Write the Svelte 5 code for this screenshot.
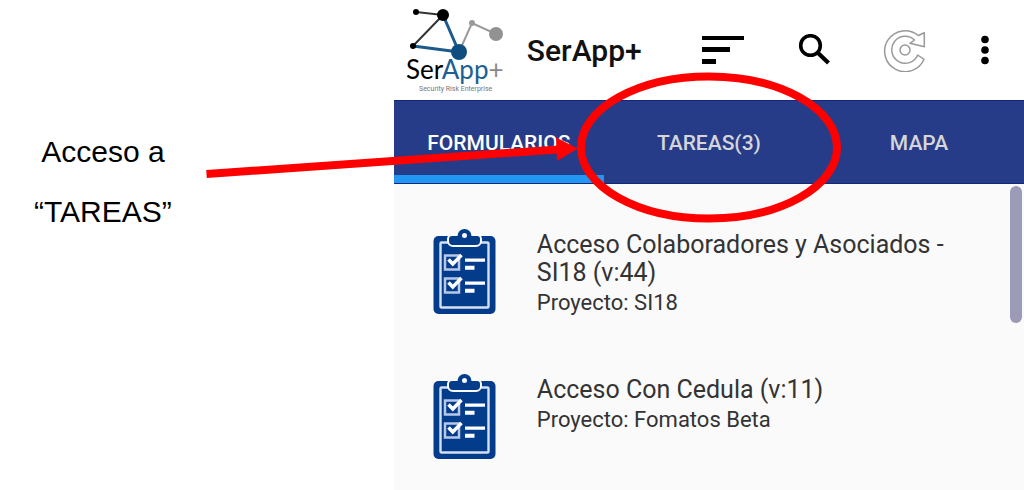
<script lang="ts">
	type Tab = {
		id: string;
		label: string;
	};

	type Form = {
		title: string;
		project: string;
	};

	const tabs: Tab[] = [
		{ id: 'forms', label: 'FORMULARIOS' },
		{ id: 'tasks', label: 'TAREAS(3)' },
		{ id: 'map', label: 'MAPA' }
	];

	const forms: Form[] = [
		{ title: 'Acceso Colaboradores y Asociados - SI18 (v:44)', project: 'SI18' },
		{ title: 'Acceso Con Cedula (v:11)', project: 'Fomatos Beta' }
	];

	let active = $state('forms');
</script>

<div class="slide">
	<p class="caption">Acceso a<br />“TAREAS”</p>

	<main class="app">
		<header class="toolbar">
			<svg class="logo" viewBox="0 0 98 90" role="img" aria-label="SerApp+">
				<g stroke-width="2">
					<path d="M9 7 36 10M36 10 6 41" stroke="#333" />
					<path d="M36 10 52 47M6 41 52 47" stroke="#1b5a8c" stroke-width="3" />
					<path d="M52 47 65 18 89 29" fill="none" stroke="#999" />
				</g>
				<circle cx="9" cy="7" r="3" />
				<circle cx="36" cy="10" r="6" />
				<circle cx="6" cy="41" r="3" />
				<circle cx="52" cy="47" r="8" fill="#0e4f80" />
				<circle cx="65" cy="18" r="3" fill="#999" />
				<circle cx="89" cy="29" r="7" fill="#929292" />
				<text class="brand" x="-1" y="74"
					>Ser<tspan fill="#1b5f94">App</tspan><tspan fill="#888">+</tspan></text
				>
				<text class="motto" x="12" y="86">Security Risk Enterprise</text>
			</svg>
			<h1>SerApp+</h1>
			<button type="button" aria-label="Ordenar">
				<svg width="42" height="30" viewBox="0 0 42 30">
					<path d="M0 1h42v4H0zM0 12h28v5H0zM0 24h14v5H0z" />
				</svg>
			</button>
			<button type="button" aria-label="Buscar">
				<svg width="32" height="32" viewBox="0 0 32 32" fill="none" stroke="#000">
					<circle cx="12.5" cy="11.5" r="9.8" stroke-width="3.6" />
					<path d="m19 18 11.500 11" stroke-width="4.200" />
				</svg>
			</button>
			<button type="button" aria-label="Sincronizar">
				<svg width="44" height="44" viewBox="0 0 44 44" fill="none" stroke="#999" stroke-width="1.500">
					<path
						d="M35.300 7.500A20.500 20.500 0 1 0 41 31.300L34.700 27A13.500 13.500 0 1 1 31.500 12L27 15.300 41.300 18.700V4.700Z"
						stroke-linejoin="round"
					/>
					<circle cx="22" cy="22" r="5" />
				</svg>
			</button>
			<button class="more" type="button" aria-label="Más opciones">
				<svg width="8" height="30" viewBox="0 0 8 30">
					<circle cx="4" cy="4.500" r="3.800" />
					<circle cx="4" cy="15" r="3.800" />
					<circle cx="4" cy="25.500" r="3.800" />
				</svg>
			</button>
		</header>

		<nav class="tabs">
			{#each tabs as tab (tab.id)}
				<button
					type="button"
					class:active={active === tab.id}
					aria-pressed={active === tab.id}
					onclick={() => (active = tab.id)}
				>
					{tab.label}
				</button>
			{/each}
		</nav>

		<div class="content">
			<ul>
				{#each forms as form (form.title)}
					<li>
						<svg class="clipboard" viewBox="0 0 64 86" aria-hidden="true">
							<rect x="0.500" y="7" width="62" height="78" rx="5" fill="#043c8c" />
							<rect
								x="7.500"
								y="13.500"
								width="48"
								height="65"
								rx="1"
								fill="#043c8c"
								stroke="#d5e0f2"
								stroke-width="2.400"
							/>
							<g fill="#043c8c">
								<g stroke="#fafafa" stroke-width="4">
									<circle cx="31.500" cy="7" r="7" />
									<path d="M19 7h25a3 3 0 0 1 3 3v2a4 4 0 0 1-4 4H20a4 4 0 0 1-4-4v-2a3 3 0 0 1 3-3Z" />
								</g>
								<circle cx="31.500" cy="7" r="7" />
								<path d="M19 7h25a3 3 0 0 1 3 3v2a4 4 0 0 1-4 4H20a4 4 0 0 1-4-4v-2a3 3 0 0 1 3-3Z" />
							</g>
							<circle cx="31.500" cy="6.500" r="2.500" fill="#fafafa" />
							{#each [0, 23] as y}
								<g transform="translate(0 {y})">
									<rect
										x="12"
										y="26.500"
										width="14"
										height="14"
										fill="none"
										stroke="#b6c8e6"
										stroke-width="2.500"
									/>
									<path d="m15.500 30.500 4.300 4.500 8.700-9" fill="none" stroke="#fff" stroke-width="3.500" />
									<path d="M32 29.500h20v3.200H32zM32 36.700h9.500v4H32z" fill="#fff" />
								</g>
							{/each}
						</svg>
						<div class="details">
							<h2>{form.title}</h2>
							<p>Proyecto: {form.project}</p>
						</div>
					</li>
				{/each}
			</ul>
			<span class="scroll-thumb"></span>
		</div>
	</main>

	<!-- pointer and highlight drawn over the app -->
	<svg class="marker" viewBox="0 0 1024 490" aria-hidden="true">
		<ellipse cx="709" cy="147.500" rx="128" ry="71" fill="none" stroke="#f00" stroke-width="8" />
		<path d="M206.500 174 558 149.500" stroke="#f00" stroke-width="8" />
		<path d="m556 137.500 22 11-21 12.500Z" fill="#f00" />
	</svg>
</div>

<style>
	:global(body) {
		margin: 0;
		background: #fff;
	}

	.slide {
		position: relative;
		display: grid;
		grid-template-columns: 5fr 8fr;
		min-height: 100vh;
	}

	.caption {
		margin: 0;
		padding: 122px 188px 0 0;
		padding-left: 0;
		color: #000;
		font-family: 'Arial Narrow', 'Liberation Sans', sans-serif;
		font-size: 30px;
		line-height: 60px;
		text-align: center;
		white-space: nowrap;
	}

	.app {
		display: flex;
		flex-direction: column;
		color: #333;
		background: #fafafa;
		font-family: Roboto, sans-serif;
	}

	.toolbar {
		display: flex;
		height: 100px;
		padding-right: 4px;
		align-items: center;
		background: #fff;
	}

	.logo {
		width: 98px;
		height: 90px;
		margin-left: 13px;
		flex: none;
		overflow: visible;
	}

	.brand {
		font-family: Lato, sans-serif;
		font-size: 26px;
	}

	.motto {
		fill: #777;
		font-size: 7px;
	}

	h1 {
		flex: 1;
		margin: 0 0 0 22px;
		color: #111;
		font-size: 30px;
		font-weight: 500;
	}

	button {
		padding: 0;
		background: none;
		border: 0;
		cursor: pointer;
		font: inherit;
	}

	.toolbar button {
		display: flex;
		width: 91px;
		height: 64px;
		align-items: center;
		justify-content: center;
	}

	.toolbar .more {
		width: 70px;
	}

	.tabs {
		display: grid;
		grid-template-columns: repeat(3, 1fr);
		background: #263c88;
		border-top: 1px solid #14267a;
		border-bottom: 1px solid #14267a;
	}

	.tabs button {
		height: 82px;
		padding-top: 2px;
		color: #d6d6d8;
		border-top: 8px solid transparent;
		border-bottom: 8px solid transparent;
		font-size: 21px;
		font-weight: 500;
	}

	.tabs .active {
		color: #fff;
		border-bottom-color: #2196f3;
	}

	.content {
		position: relative;
		flex: 1;
	}

	ul {
		margin: 0;
		padding: 0;
		list-style: none;
	}

	li {
		display: flex;
		min-height: 100px;
		padding: 45px 60px 0 39px;
		align-items: flex-start;
		gap: 40px;
	}

	.clipboard {
		width: 64px;
		height: 86px;
		flex: none;
		overflow: visible;
	}

	.details {
		padding-top: 2px;
	}

	h2 {
		margin: 0;
		font-size: 25px;
		font-weight: 400;
		line-height: 28px;
	}

	.details p {
		margin: 0;
		font-size: 22px;
		line-height: 32px;
	}

	.scroll-thumb {
		position: absolute;
		top: 2px;
		right: 2px;
		width: 12px;
		height: 137px;
		background: #9c9bb5;
		border-radius: 6px;
	}

	.marker {
		position: absolute;
		top: 0;
		left: 0;
		width: 100%;
		height: auto;
		pointer-events: none;
	}
</style>
